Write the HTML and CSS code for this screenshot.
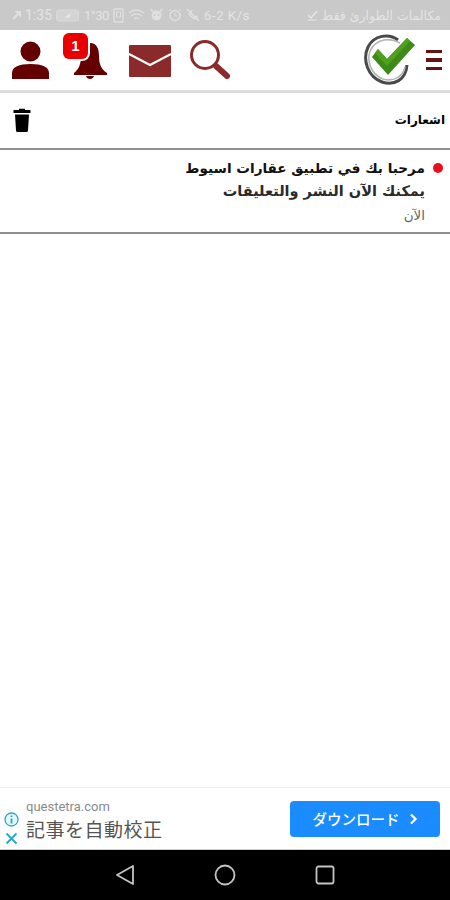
FILE: index.html
```html
<!DOCTYPE html>
<html lang="ar">
<head>
    <meta charset="UTF-8">
    <meta name="viewport" content="width=device-width, initial-scale=1.0">
    <title>اشعارات</title>
    <link rel="stylesheet" href="styles.css">
</head>
<body>

<div class="status-bar">
    <div class="status-left">
        <svg class="st-key" width="9" height="10" viewBox="0 0 9 10"><path d="M1 9 L6 4 M5 2 L8 2 L8 5 Z" stroke="#e0e0e0" stroke-width="2" fill="#e0e0e0"/></svg>
        <span>1:35</span>
        <svg width="24" height="13" viewBox="0 0 24 13"><rect x="0.5" y="1" width="22" height="11" rx="2" fill="#d4d4d4" stroke="#dadada"/><path d="M9 8 L15 4 L13 9 Z" fill="#e8e8e8"/></svg>
        <span class="st-tight">1°30</span>
        <svg width="11" height="15" viewBox="0 0 11 15"><rect x="1" y="1" width="9" height="13" rx="1" fill="none" stroke="#e0e0e0" stroke-width="1.4"/><rect x="3.5" y="4" width="4" height="5" fill="none" stroke="#e0e0e0"/></svg>
        <svg width="17" height="14" viewBox="0 0 17 14"><path d="M1 5 Q8 -1 16 5 M3 8 Q8 4 14 8 M6 11 Q8 9 11 11" fill="none" stroke="#dedede" stroke-width="1.5"/></svg>
        <svg width="15" height="14" viewBox="0 0 15 14"><circle cx="7.5" cy="7.5" r="5" fill="#e0e0e0"/><circle cx="5.5" cy="7" r="1" fill="#c8c8c8"/><circle cx="9.5" cy="7" r="1" fill="#c8c8c8"/><path d="M2 1 L4 4 M13 1 L11 4" stroke="#e0e0e0" stroke-width="1.5"/></svg>
        <svg width="14" height="14" viewBox="0 0 14 14"><circle cx="7" cy="7.5" r="5" fill="none" stroke="#e0e0e0" stroke-width="1.5"/><path d="M7 5 V8 H9 M1 3 L3 1 M13 3 L11 1" fill="none" stroke="#e0e0e0"/></svg>
        <svg width="14" height="14" viewBox="0 0 14 14"><path d="M1 1 L13 13 M3 5 Q5 10 10 11 M6 2 L5 4 M9 9 L12 8" fill="none" stroke="#e0e0e0" stroke-width="1.6"/></svg>
        <span class="st-speed">6-2 K/s</span>
    </div>
    <div class="status-right">
        <svg width="12" height="12" viewBox="0 0 12 12"><path d="M1 6 L4 9 L10 2 M1 11 H10" fill="none" stroke="#e8e8e8" stroke-width="1.2"/></svg>
        <span dir="rtl">مكالمات الطوارئ فقط</span>
    </div>
</div>

<div class="top-bar">
    <div class="top-icons">
        <svg class="ic-user" width="40" height="40" viewBox="0 0 40 40">
            <circle cx="19.5" cy="10.5" r="10" fill="#650000"/>
            <path d="M1 38 V32 C1 26 8 23 19.5 23 C31 23 38 26 38 32 V38 Z" fill="#650000"/>
        </svg>
        <div class="bell-wrap">
            <svg width="36" height="42" viewBox="0 0 36 42">
                <path d="M18 2 C25 2 27 8 27 15 C27 23 29 28 35 32 V34 H2 V32 C7 28 9 23 9 15 C9 8 11 2 18 2 Z" fill="#650000"/>
                <path d="M14 35 H22 C21 39 15 39 14 35 Z" fill="#650000"/>
            </svg>
            <span class="badge">1</span>
        </div>
        <svg class="ic-mail" width="42" height="32" viewBox="0 0 42 32">
            <rect x="0" y="0" width="42" height="32" rx="1" fill="#8b2a2a"/>
            <path d="M0 9 L21 20 L42 9" fill="none" stroke="#fff" stroke-width="2.2"/>
        </svg>
        <svg class="ic-search" width="42" height="42" viewBox="0 0 42 42">
            <circle cx="16" cy="16" r="13.5" fill="none" stroke="#8b2a2a" stroke-width="3"/>
            <path d="M27 27 L38 37" stroke="#8b2a2a" stroke-width="6" stroke-linecap="round"/>
        </svg>
    </div>
    <div class="top-logo">
        <svg width="54" height="54" viewBox="0 0 54 54">
            <path d="M36 7 C27 0 12 2 6 14 C0 27 6 44 20 49 C32 53 44 47 45 32" fill="none" stroke="#4a4a4a" stroke-width="3"/>
            <path d="M38 10 C28 4 15 6 9 16 C4 26 8 41 21 46 C31 49 41 44 43 34" fill="none" stroke="#b5b5b5" stroke-width="1.6"/>
            <path d="M10 24 L16 16 L25 26 L45 5 L53 12 L26 42 Z" fill="#3d8a17"/>
            <path d="M16 16 L25 26 L45 5 L48 8 L25 33 L13 20 Z" fill="#4fa01f"/>
        </svg>
        <div class="menu-btn"><i></i><i></i><i></i></div>
    </div>
</div>

<div class="title-row">
    <svg width="18" height="24" viewBox="0 0 18 24">
        <path d="M6 2 V0.8 H12 V2 H17.5 V5 H0.5 V2 Z" fill="#000"/>
        <path d="M2 6.5 H16 L15 22.5 Q15 24 13.5 24 H4.5 Q3 24 3 22.5 Z" fill="#000"/>
    </svg>
    <h1 dir="rtl">اشعارات</h1>
</div>

<div class="notice" dir="rtl">
    <div class="notice-head">
        <span class="dot"></span>
        <span class="notice-title">مرحبا بك في تطبيق عقارات اسيوط</span>
    </div>
    <p class="notice-text">يمكنك الآن النشر والتعليقات</p>
    <p class="notice-time">الآن</p>
</div>

<div class="spacer"></div>

<div class="ad">
    <div class="ad-side">
        <svg width="15" height="15" viewBox="0 0 15 15"><circle cx="7.5" cy="7.5" r="6.5" fill="#e6f7fb" stroke="#28a9c9" stroke-width="1.3"/><path d="M7.5 3.5 V5 M7.5 6.5 V11.5" stroke="#28a9c9" stroke-width="1.8"/></svg>
        <svg width="13" height="13" viewBox="0 0 13 13"><path d="M1.5 1.5 L11.5 11.5 M11.5 1.5 L1.5 11.5" stroke="#28a9c9" stroke-width="1.9"/></svg>
    </div>
    <div class="ad-text">
        <span class="ad-domain">questetra.com</span>
        <span class="ad-title">記事を自動校正</span>
    </div>
    <div class="ad-btn">
        <span>ダウンロード</span>
        <svg width="9" height="12" viewBox="0 0 9 12"><path d="M2 1.5 L6.5 6 L2 10.5" fill="none" stroke="#fff" stroke-width="2.4"/></svg>
    </div>
</div>

<div class="nav-bar">
    <svg width="20" height="22" viewBox="0 0 20 22"><path d="M18 2 V20 L2 11 Z" fill="none" stroke="#c4c4c4" stroke-width="1.8" stroke-linejoin="round"/></svg>
    <svg width="22" height="22" viewBox="0 0 22 22"><circle cx="11" cy="11" r="9.5" fill="none" stroke="#c4c4c4" stroke-width="1.8"/></svg>
    <svg width="20" height="20" viewBox="0 0 20 20"><rect x="1.5" y="1.5" width="17" height="17" rx="2" fill="none" stroke="#c4c4c4" stroke-width="1.8"/></svg>
</div>

</body>
</html>
```

FILE: styles.css
```css
* {
    margin: 0;
    padding: 0;
    box-sizing: border-box;
}

body {
    display: flex;
    flex-direction: column;
    width: 450px;
    height: 900px;
    overflow: hidden;
    background: white;
    font-family: "DejaVu Sans", "Noto Sans", sans-serif;
}

.status-bar {
    display: flex;
    justify-content: space-between;
    align-items: center;
    height: 30px;
    padding: 0 9px 0 12px;
    background-color: #c9c9c9;
    color: #e4e4e4;
    font-family: "Roboto", sans-serif;
    font-size: 12px;
}

.status-left {
    display: flex;
    align-items: center;
    gap: 4px;
}

.status-left span {
    font-size: 14px;
}

.status-left .st-tight {
    font-size: 13px;
    letter-spacing: -0.5px;
}

.status-left .st-speed {
    font-size: 13.5px;
    letter-spacing: 0.4px;
}

.status-right {
    display: flex;
    align-items: center;
    gap: 3px;
}

.status-right span {
    font-family: "DejaVu Sans", sans-serif;
    font-size: 12.5px;
}

.top-bar {
    display: flex;
    justify-content: space-between;
    align-items: center;
    height: 63px;
    padding: 0 8px 0 11px;
    border-bottom: 3px solid #dcdcdc;
}

.top-icons {
    display: flex;
    align-items: center;
}

.ic-user {
    margin-top: 2px;
}

.bell-wrap {
    position: relative;
    width: 36px;
    height: 42px;
    margin-left: 21px;
    margin-top: 3px;
}

.badge {
    position: absolute;
    top: -8px;
    left: -9px;
    width: 25px;
    height: 26px;
    border-radius: 6px;
    background-color: #e80000;
    box-shadow: 0 0 0 2px white;
    color: white;
    font-family: "Liberation Sans", sans-serif;
    font-size: 15px;
    font-weight: bold;
    line-height: 25px;
    text-align: center;
}

.ic-mail {
    margin-left: 21px;
    margin-top: 1px;
}

.ic-search {
    margin-left: 18px;
    margin-top: 0;
}

.top-logo {
    display: flex;
    align-items: center;
    gap: 10px;
}

.menu-btn {
    display: flex;
    flex-direction: column;
    gap: 5px;
    width: 16px;
}

.menu-btn i {
    display: block;
    height: 3.5px;
    background-color: #5e1616;
}

.title-row {
    display: flex;
    justify-content: space-between;
    align-items: center;
    height: 57px;
    padding: 0 5px 1px 13px;
    border-bottom: 2px solid #8e8e8e;
}

.title-row h1 {
    font-size: 12px;
    font-weight: bold;
    color: #000;
    margin-right: 0;
}

.notice {
    height: 84px;
    padding: 7px 25px 0 0;
    border-bottom: 2px solid #8e8e8e;
    color: #111;
    position: relative;
}

.notice-head {
    display: flex;
    align-items: center;
    height: 21px;
}

.dot {
    position: absolute;
    right: 7px;
    top: 13px;
    width: 10px;
    height: 10px;
    border-radius: 50%;
    background-color: #e8101c;
}

.notice-title {
    font-size: 13.6px;
    font-weight: bold;
}

.notice-text {
    font-size: 14.5px;
    font-weight: bold;
    line-height: 26px;
    color: #2a2a2a;
}

.notice-time {
    font-size: 13.5px;
    line-height: 23px;
    color: #666;
}

.spacer {
    flex: 1;
}

.ad {
    display: flex;
    align-items: center;
    height: 63px;
    border-top: 1px solid #eeeeee;
    border-bottom: 1px solid #cfcfcf;
    padding: 0 10px 0 3px;
    background: white;
}

.ad-side {
    display: flex;
    flex-direction: column;
    align-items: center;
    gap: 5px;
    width: 16px;
    margin-top: 20px;
}

.ad-text {
    display: flex;
    flex-direction: column;
    flex: 1;
    margin-left: 7px;
    padding-top: 2px;
}

.ad-domain {
    font-family: "Roboto", sans-serif;
    font-size: 13px;
    line-height: 17px;
    color: #8a8a8a;
}

.ad-title {
    font-family: "Noto Sans CJK JP", sans-serif;
    font-size: 19px;
    line-height: 27px;
    letter-spacing: 0.5px;
    color: #555;
}

.ad-btn {
    display: flex;
    justify-content: center;
    align-items: center;
    gap: 9px;
    width: 150px;
    height: 36px;
    margin-top: 0;
    border-radius: 4px;
    background-color: #1a8cff;
    color: white;
    font-family: "Noto Sans CJK JP", sans-serif;
    font-size: 14.5px;
    font-weight: 500;
}

.nav-bar {
    display: flex;
    justify-content: space-between;
    align-items: center;
    height: 50px;
    padding: 0 115px;
    background-color: #000;
}
```
